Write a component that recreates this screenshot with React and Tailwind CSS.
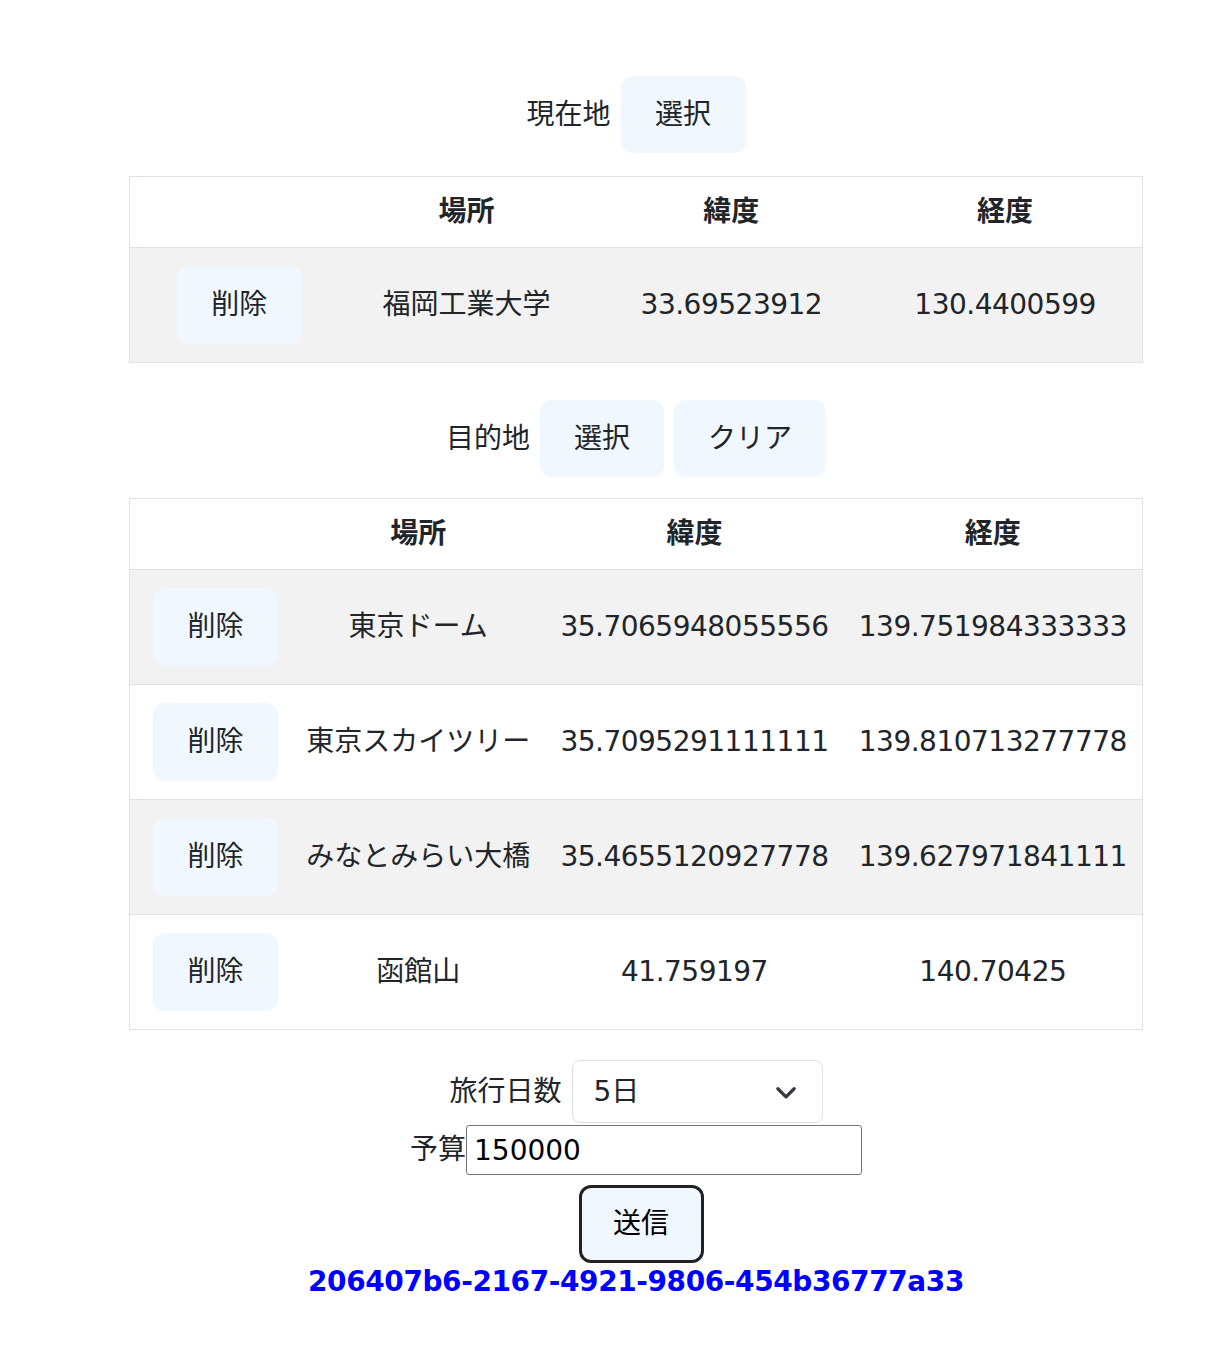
import { useState } from "react";

const origin = [{ name: "福岡工業大学", lat: "33.69523912", lng: "130.4400599" }];

const destinations = [
	{ name: "東京ドーム", lat: "35.7065948055556", lng: "139.751984333333" },
	{ name: "東京スカイツリー", lat: "35.7095291111111", lng: "139.810713277778" },
	{ name: "みなとみらい大橋", lat: "35.4655120927778", lng: "139.627971841111" },
	{ name: "函館山", lat: "41.759197", lng: "140.70425" },
];

const font = { fontFamily: '"DejaVu Sans", "Noto Sans CJK JP", sans-serif' };

function SoftButton({ children, onClick, width = "w-[125px]", height = "h-[77px]" }) {
	return (
		<button
			type="button"
			onClick={onClick}
			className={`${width} ${height} whitespace-nowrap rounded-xl bg-[#f0f7ff] text-[28px] leading-[38px] text-[#212529]`}
		>
			{children}
		</button>
	);
}

function PlaceTable({ rows, onDelete }) {
	return (
		<table className="w-full border-collapse border border-[#dee2e6] text-[28px] leading-[38px] text-[#212529]">
			<thead>
				<tr className="border-b border-[#dee2e6] bg-white">
					<th className="pl-[23px] pr-[13px] py-4"></th>
					<th className="px-[15px] py-4 font-bold">場所</th>
					<th className="px-[15px] py-4 font-bold">緯度</th>
					<th className="px-[15px] py-4 font-bold">経度</th>
				</tr>
			</thead>
			<tbody>
				{rows.map((row, i) => (
					<tr key={row.name} className={`border-b border-[#dee2e6] ${i % 2 === 0 ? "bg-[#f2f2f2]" : "bg-white"}`}>
						<td className="pl-[23px] pr-[13px] py-[18px] text-center">
							<SoftButton height="h-[78px]" onClick={() => onDelete(i)}>削除</SoftButton>
						</td>
						<td className="whitespace-nowrap px-[15px] py-[18px] text-center">{row.name}</td>
						<td className="whitespace-nowrap px-[15px] py-[18px] text-center tracking-[-0.5px]">{row.lat}</td>
						<td className="whitespace-nowrap px-[15px] py-[18px] text-center tracking-[-0.5px]">{row.lng}</td>
					</tr>
				))}
			</tbody>
		</table>
	);
}

export default function App() {
	const [from, setFrom] = useState(origin);
	const [to, setTo] = useState(destinations);
	const [days, setDays] = useState("5");
	const [budget, setBudget] = useState("150000");

	return (
		<div className="min-h-[1370px] bg-white pt-[76px]" style={font}>
			<div className="ml-[129px] w-[1014px] text-[28px] leading-[38px] text-[#212529]">
				<div className="flex items-center justify-center gap-[10px]">
					<span>現在地</span>
					<SoftButton>選択</SoftButton>
				</div>

				<div className="mt-[23px]">
					<PlaceTable rows={from} onDelete={(i) => setFrom(from.filter((_, idx) => idx !== i))} />
				</div>

				<div className="mt-[37px] flex items-center justify-center gap-[10px]">
					<span>目的地</span>
					<div className="flex gap-[10px]">
						<SoftButton width="w-[124px]">選択</SoftButton>
						<SoftButton width="w-[152px]" onClick={() => setTo([])}>クリア</SoftButton>
					</div>
				</div>

				<div className="mt-[21px]">
					<PlaceTable rows={to} onDelete={(i) => setTo(to.filter((_, idx) => idx !== i))} />
				</div>

				<div className="mt-[30px] flex flex-col items-center">
					<div className="flex items-center gap-[10px]">
						<label htmlFor="days">旅行日数</label>
						<div className="relative">
							<select
								id="days"
								value={days}
								onChange={(e) => setDays(e.target.value)}
								className="h-[63px] w-[251px] appearance-none rounded-lg border border-[#dee2e6] bg-white pl-[21px] text-[28px] text-[#212529] outline-none"
							>
								{[1, 2, 3, 4, 5, 6, 7].map((d) => (
									<option key={d} value={d}>{d}日</option>
								))}
							</select>
							<svg
								className="pointer-events-none absolute right-[24px] top-1/2 h-[26px] w-[26px] -translate-y-1/2"
								viewBox="0 0 16 16"
								fill="none"
								stroke="#343a40"
								strokeWidth="2"
								strokeLinecap="round"
								strokeLinejoin="round"
							>
								<path d="m3 6 5 5 5-5" />
							</svg>
						</div>
					</div>

					<div className="mt-[2px] flex items-center">
						<label htmlFor="budget">予算</label>
						<input
							id="budget"
							value={budget}
							onChange={(e) => setBudget(e.target.value)}
							className="h-[50px] w-[396px] rounded-[3px] border border-[#767676] px-[7px] text-[28px] text-black outline-none"
						/>
					</div>

					<button
						type="button"
						className="ml-[10px] mt-[10px] h-[78px] w-[125px] rounded-xl border-[3px] border-[#222] bg-[#f0f7ff] text-[28px] text-black"
					>
						送信
					</button>

					<p className="text-[28px] font-bold leading-[38px] tracking-[-0.4px] text-[#0000ff]">
						206407b6-2167-4921-9806-454b36777a33
					</p>
				</div>
			</div>
		</div>
	);
}
